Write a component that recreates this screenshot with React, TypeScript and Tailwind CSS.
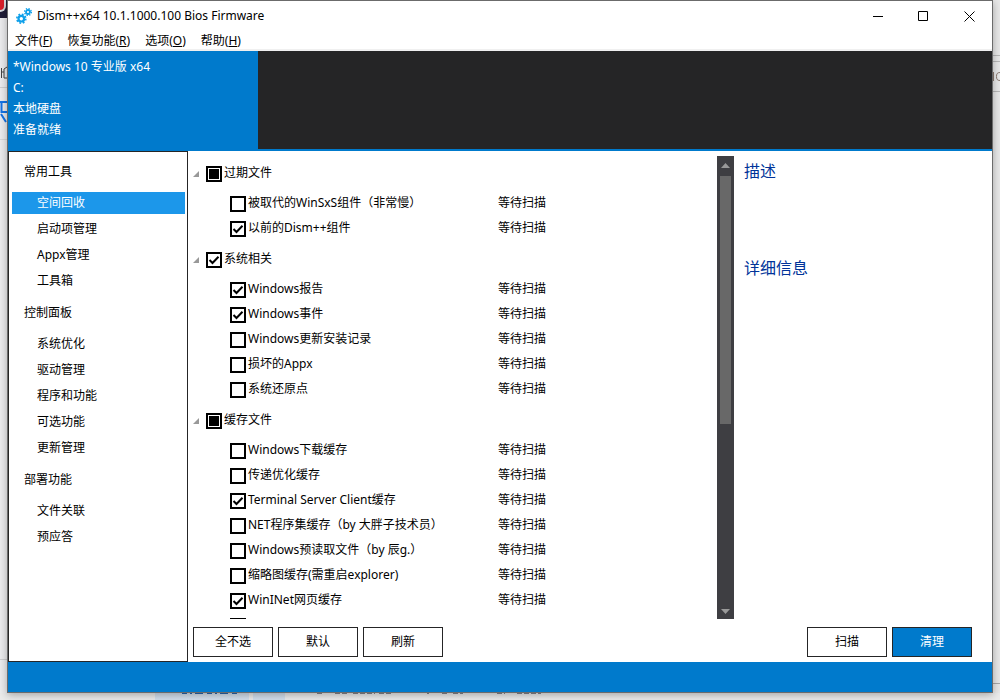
import React, { useEffect, useRef, useState } from 'react'

type CheckState = "on" | "off" | "mixed"
type Item = { label: string; state: CheckState }
type Group = { title: string; state: CheckState; items: Item[] }

const menus = [
    { text: "文件", key: "F" },
    { text: "恢复功能", key: "R" },
    { text: "选项", key: "O" },
    { text: "帮助", key: "H" },
]

const sections = [
    { title: "常用工具", items: ["空间回收", "启动项管理", "Appx管理", "工具箱"] },
    { title: "控制面板", items: ["系统优化", "驱动管理", "程序和功能", "可选功能", "更新管理"] },
    { title: "部署功能", items: ["文件关联", "预应答"] },
]

const groups: Group[] = [
    {
        title: "过期文件", state: "mixed", items: [
            { label: "被取代的WinSxS组件（非常慢）", state: "off" },
            { label: "以前的Dism++组件", state: "on" },
        ]
    },
    {
        title: "系统相关", state: "on", items: [
            { label: "Windows报告", state: "on" },
            { label: "Windows事件", state: "on" },
            { label: "Windows更新安装记录", state: "off" },
            { label: "损坏的Appx", state: "off" },
            { label: "系统还原点", state: "off" },
        ]
    },
    {
        title: "缓存文件", state: "mixed", items: [
            { label: "Windows下载缓存", state: "off" },
            { label: "传递优化缓存", state: "off" },
            { label: "Terminal Server Client缓存", state: "on" },
            { label: "NET程序集缓存（by 大胖子技术员）", state: "off" },
            { label: "Windows预读取文件（by 辰g.）", state: "off" },
            { label: "缩略图缓存(需重启explorer)", state: "off" },
            { label: "WinINet网页缓存", state: "on" },
            { label: "", state: "off" },
        ]
    },
]

function Gears() {
    return (
        <svg width="16" height="16" viewBox="0 0 16 16" fill="none" stroke="#0fa0ea" aria-hidden="true">
            <circle cx="5.3" cy="10.7" r="2.8" strokeWidth="2.2" />
            <circle cx="5.3" cy="10.7" r="4.5" strokeWidth="1.6" strokeDasharray="1.77 1.77" />
            <circle cx="12" cy="4" r="2" strokeWidth="1.8" />
            <circle cx="12" cy="4" r="3.4" strokeWidth="1.3" strokeDasharray="1.34 1.34" />
        </svg>
    )
}

function Tick({ label, state }: { label: string; state: CheckState }) {
    const [value, setvalue] = useState<CheckState>(state)
    const ref = useRef<HTMLInputElement>(null)

    useEffect(() => {
        if (ref.current) ref.current.indeterminate = value === "mixed"
    }, [value])

    return (
        <label className="flex h-[18px] items-center">
            <span className="grid h-4 w-4 shrink-0">
                <input
                    ref={ref}
                    type="checkbox"
                    aria-label={label || "其他"}
                    checked={value === "on"}
                    onChange={() => setvalue(value === "on" ? "off" : "on")}
                    className="col-start-1 row-start-1 h-4 w-4 appearance-none border-2 border-black bg-white"
                />
                {value === "on" && (
                    <svg className="pointer-events-none col-start-1 row-start-1" width="16" height="16" viewBox="0 0 16 16" fill="none" stroke="#000" strokeWidth="2" aria-hidden="true">
                        <path d="M3.5 8 L6.5 11 L12.5 4.8" />
                    </svg>
                )}
                {value === "mixed" && <span className="pointer-events-none col-start-1 row-start-1 m-[3px] bg-black" />}
            </span>
            <span className="ml-0.5 whitespace-nowrap pb-0.5">{label}</span>
        </label>
    )
}

function PlainButton({ children, primary }: { children: React.ReactNode; primary?: boolean }) {
    return (
        <button className={primary ? "h-[30px] w-20 border border-[#252526] bg-[#007acc] text-white" : "h-[30px] w-20 border border-[#252526] bg-white"}>
            {children}
        </button>
    )
}

function TitleBar() {
    return (
        <div className="flex h-[30px] items-center">
            <div className="flex flex-1 items-center gap-[5px] pl-2">
                <Gears />
                <h1>Dism++x64 10.1.1000.100 Bios Firmware</h1>
            </div>
            <button aria-label="最小化" className="grid h-full w-[46px] place-items-center">
                <svg width="11" height="11" viewBox="0 0 11 11" stroke="#000"><path d="M1 5.5H11" /></svg>
            </button>
            <button aria-label="最大化" className="grid h-full w-[46px] place-items-center">
                <svg width="11" height="11" viewBox="0 0 11 11" stroke="#000" fill="none"><path d="M.5 .5H9.5V9.5H.5Z" /></svg>
            </button>
            <button aria-label="关闭" className="grid h-full w-[46px] place-items-center">
                <svg width="11" height="11" viewBox="0 0 11 11" stroke="#000"><path d="M.5 .5L10.5 10.5M10.5 .5L.5 10.5" /></svg>
            </button>
        </div>
    )
}

function Sidebar() {
    const [active, setactive] = useState("空间回收")

    return (
        <nav className="w-[180px] shrink-0 border border-[#252526] pt-px">
            {sections.map((section) => (
                <div key={section.title}>
                    <h2 className="flex h-[37px] items-center pl-[15px]">{section.title}</h2>
                    {section.items.map((item) => (
                        <div key={item} className="flex h-[26px] items-center pl-[3px] pr-[2px]">
                            <button
                                onClick={() => setactive(item)}
                                className={active === item ? "h-[22px] w-full bg-[#1c97ea] pl-[25px] text-left text-white" : "h-[22px] w-full pl-[25px] text-left"}
                            >
                                {item}
                            </button>
                        </div>
                    ))}
                </div>
            ))}
        </nav>
    )
}

function ScrollBar() {
    return (
        <div className="mt-[5px] flex w-[17px] shrink-0 flex-col bg-[#3e3e42]">
            <div className="grid h-5 place-items-center pb-0.5">
                <svg width="9" height="5" viewBox="0 0 9 5" fill="#999"><path d="M0 5L4.5 0L9 5Z" /></svg>
            </div>
            <div className="flex-1 px-[3px]">
                <div className="h-[58%] bg-[#686868]" />
            </div>
            <div className="grid h-4 place-items-center">
                <svg width="9" height="5" viewBox="0 0 9 5" fill="#999"><path d="M0 0L4.5 5L9 0Z" /></svg>
            </div>
        </div>
    )
}

function CleanList() {
    return (
        <div className="h-0 min-h-full flex-1 overflow-hidden pt-[5px]">
            {groups.map((group) => (
                <section key={group.title}>
                    <div className="flex h-9 items-center gap-[7px] pl-[5px]">
                        <svg width="6" height="6" viewBox="0 0 6 6" fill="#999" aria-hidden="true"><path d="M6 0V6H0Z" /></svg>
                        <Tick label={group.title} state={group.state} />
                    </div>
                    {group.items.map((item, index) => (
                        <div key={index} className="flex h-[25px] items-center pb-px pl-[42px]">
                            <div className="w-[268px]"><Tick label={item.label} state={item.state} /></div>
                            <span className="pb-0.5">{item.label && "等待扫描"}</span>
                        </div>
                    ))}
                </section>
            ))}
        </div>
    )
}

// slivers of the browser page that show around the window
function LeftEdge() {
    return (
        <div className="w-[7px] shrink-0 overflow-hidden bg-[#ececee]" aria-hidden="true">
            <div className="h-[18px] bg-[#201e38]">
                <div className="h-3 w-[6px] rounded-br-full border-b-2 border-r-2 border-[#d8dce0] bg-[#d8202c]" />
            </div>
            <div className="h-[70px] border-b border-[#cfcfd1] pt-[46px]">
                <svg width="7" height="16" viewBox="0 0 7 16" fill="none" stroke="#444"><path d="M1.5 4V14M2 8H4M7 3L4 5V14H7" /></svg>
            </div>
            <div className="h-[52px] border-b border-[#d8d8da] pt-3">
                <svg width="7" height="24" viewBox="0 0 7 24" fill="none" stroke="#1473e6" strokeWidth="2"><path d="M0 2H7M1.5 2V12H7M1 14L6 22" /></svg>
            </div>
            <div className="h-[520px] border-b border-[#cfcfd1]" />
        </div>
    )
}

function RightEdge() {
    return (
        <div className="w-[7px] shrink-0 overflow-hidden bg-[#e8e8e8]" aria-hidden="true">
            <div className="h-[56px] border-b border-[#b8b8b8]" />
            <div className="h-[6px] border-b border-[#b8b8b8]" />
            <div className="h-[30px] border-b border-[#b8b8b8] pt-[9px]">
                <svg width="7" height="12" viewBox="0 0 7 12" fill="none" stroke="#8a7a70"><path d="M.5 1V10M7 1.5C4 1.5 3.5 3 3.5 5.5S4 9.5 7 9.5" /></svg>
            </div>
            <div className="h-[592px] border-b border-[#a8a8a8]" />
        </div>
    )
}

function BottomEdge() {
    return (
        <div className="flex h-[7px] shrink-0 gap-1 bg-[#ebebeb] pl-[155px]" aria-hidden="true">
            <div className="w-[94px] bg-[#d3dfec] pl-[27px]">
                <svg width="58" height="2" stroke="#2a66ac" strokeWidth="2" strokeDasharray="5 3 2 3 8 4"><path d="M0 0H58" /></svg>
            </div>
            <div className="w-8 bg-[#d3dfec]" />
            <div className="pl-7">
                <svg width="230" height="2" stroke="#85858c" strokeWidth="2"><path d="M0 0H5M18 0H32M36 0H58M62 0H76M110 0H112M125 0H131M136 0H146M180 0H188M200 0H224" strokeDasharray="5 2" /></svg>
            </div>
        </div>
    )
}

function App() {
    return (
        <div className="flex min-h-screen flex-col bg-[#ebebeb] font-['Noto_Sans','Noto_Sans_CJK_SC',sans-serif] text-xs text-black">
            <div className="flex flex-1">
                <LeftEdge />

                <main className="relative z-10 flex min-w-0 flex-1 flex-col border border-[#6b6b6b] bg-white shadow-[0_2px_8px_rgba(0,0,0,0.3)]">
                    <TitleBar />
                    <div className="flex h-5 gap-px border-b-2 border-[#f0f0f0] pt-0.5">
                        {menus.map((menu) => (
                            <button key={menu.key} className="px-[7px]">{menu.text}(<u>{menu.key}</u>)</button>
                        ))}
                    </div>

                    <header className="flex border-b-2 border-[#007acc] bg-[#252526]">
                        <div className="h-[98px] w-[250px] bg-[#007acc] pl-[5px] pt-[5px] leading-[21px] text-white">
                            <p>*Windows 10 专业版 x64</p>
                            <p>C:</p>
                            <p>本地硬盘</p>
                            <p>准备就绪</p>
                        </div>
                    </header>

                    <div className="flex flex-1">
                        <Sidebar />
                        <div className="flex min-w-0 flex-1 flex-col">
                            <div className="flex flex-1">
                                <CleanList />
                                <ScrollBar />
                                <aside className="w-[258px] shrink-0 pl-[10px] pt-2 text-base text-[#003399]">
                                    <h2 className="h-[97px]">描述</h2>
                                    <h2>详细信息</h2>
                                </aside>
                            </div>
                            <div className="flex gap-[5px] pb-[5px] pl-[5px] pr-5 pt-2">
                                <PlainButton>全不选</PlainButton>
                                <PlainButton>默认</PlainButton>
                                <PlainButton>刷新</PlainButton>
                                <div className="flex-1" />
                                <PlainButton>扫描</PlainButton>
                                <PlainButton primary>清理</PlainButton>
                            </div>
                        </div>
                    </div>

                    <footer className="h-[30px] bg-[#007acc]" />
                </main>

                <RightEdge />
            </div>
            <BottomEdge />
        </div>
    )
}

export default App
